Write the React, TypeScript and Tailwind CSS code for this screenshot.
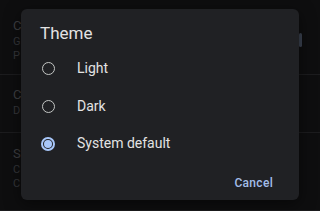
import React, { useState } from 'react';

// only the first letters of the settings page peek out from behind the dialog
const settings = [
  { title: 'C', sub: ['G', 'P'] },
  { title: 'C', sub: ['D'] },
  { title: 'S', sub: ['C', 'C'] },
];

const options = ['Light', 'Dark', 'System default'];

const Radio = ({ checked }: { checked: boolean }) =>
  checked ? (
    <span className="flex h-[14px] w-[14px] items-center justify-center rounded-full border-2 border-[#a8c7fa]">
      <span className="h-[8px] w-[8px] rounded-full bg-[#a8c7fa]" />
    </span>
  ) : (
    <span className="h-[13px] w-[13px] rounded-full border-[1.5px] border-[#c4c7c5]" />
  );

const App = () => {
  const [theme, setTheme] = useState('System default');

  return (
    <div className="relative h-[211px] w-[320px] overflow-hidden bg-[#0e0e0f] font-['Roboto',sans-serif]">
      {/* page behind the scrim */}
      <div className="flex flex-col">
        {settings.map((s, i) => (
          <div
            key={i}
            className={`flex flex-col px-[13px] ${i === 0 ? 'h-[75px] pt-[17px]' : i === 1 ? 'h-[58px] pt-[11px]' : 'h-[78px] pt-[12px]'} border-b border-[#1c1c1e]`}
          >
            <span className="text-[13px] leading-[18px] text-[#3e3f42]">{s.title}</span>
            {s.sub.map((t, j) => (
              <span key={j} className="text-[11px] leading-[14px] text-[#35363a]">{t}</span>
            ))}
          </div>
        ))}
      </div>
      <div className="absolute left-[299px] top-[33px] h-[14px] w-[3px] rounded-sm bg-[#3b4250]" />

      {/* dialog */}
      <div className="absolute left-[21px] top-[9px] flex h-[191px] w-[278px] flex-col rounded-[6px] bg-[#202124] shadow-[0_4px_16px_rgba(0,0,0,0.5)]">
        <div className="pl-[19px] pt-[12px] text-[17px] leading-[24px] text-[#e3e3e3]">Theme</div>
        <div className="mt-[5px] flex flex-col">
          {options.map((o) => (
            <button
              key={o}
              onClick={() => setTheme(o)}
              className="flex h-[37.5px] items-center pl-[20px] text-left"
            >
              <span className="flex w-[14px] justify-center">
                <Radio checked={theme === o} />
              </span>
              <span className="ml-[22px] text-[14px] text-[#e3e3e3]">{o}</span>
            </button>
          ))}
        </div>
        <div className="mt-auto flex justify-end pb-[7px] pr-[22px]">
          <button className="px-[4px] py-[2px] text-[12px] font-medium leading-[16px] tracking-[0.3px] text-[#a3bde8]">
            Cancel
          </button>
        </div>
      </div>
    </div>
  );
};

export default App;
